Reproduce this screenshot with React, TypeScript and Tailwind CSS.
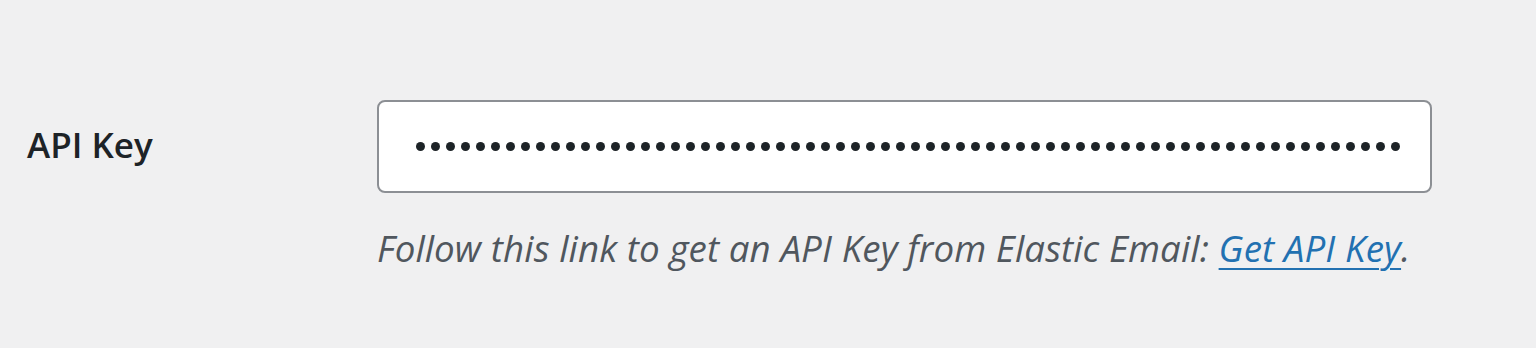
import React from "react";

export default function App() {
  const dots = Array.from({ length: 66 });
  return (
    <div
      className="w-[1536px] h-[348px] bg-[#f0f0f1] overflow-hidden"
      style={{ fontFamily: '"Open Sans", "Noto Sans", sans-serif' }}
    >
      <div className="flex pt-[100px] pl-[27px]">
        <div className="w-[350px] shrink-0 h-[93px] flex items-center pb-[4px]">
          <span className="text-[35px] font-semibold text-[#1d2327] leading-none">API Key</span>
        </div>
        <div className="flex flex-col">
          <div className="w-[1055px] h-[93px] bg-white border-2 border-[#8c8f94] rounded-[8px] flex items-center pl-[37px]">
            <div className="flex gap-[6px]">
              {dots.map((_, i) => (
                <span key={i} className="block w-[9px] h-[9px] rounded-full bg-[#1d2327]" />
              ))}
            </div>
          </div>
          <p className="mt-[30px] text-[36.7px] italic text-[#50575e] leading-[50px] whitespace-nowrap tracking-[0.1px]">
            Follow this link to get an API Key from Elastic Email:{" "}
            <a href="#" className="text-[#2271b1] underline underline-offset-[6px] decoration-2">
              Get API Key
            </a>
            .
          </p>
        </div>
      </div>
    </div>
  );
}
